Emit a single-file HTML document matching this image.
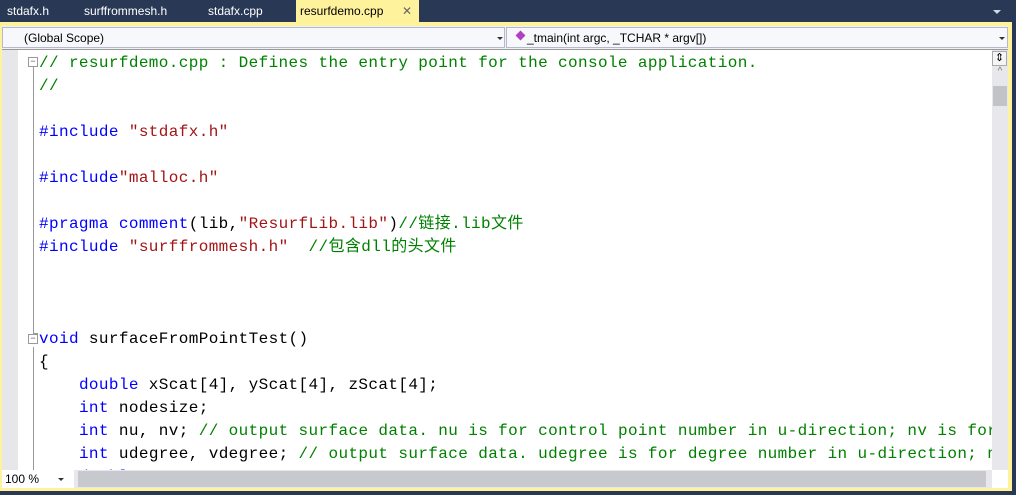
<html><head><style>
body{margin:0;width:1016px;height:495px;background:#293955;position:relative;overflow:hidden;font-family:"Liberation Sans",sans-serif}
.tab{position:absolute;top:3px;font-size:12px;color:#fff;line-height:17px}
.code{position:absolute;left:39px;font-family:"Liberation Mono","Noto Sans CJK SC",monospace;font-size:16px;letter-spacing:0.38px;white-space:pre;line-height:23px;color:#000}
.c{color:#008000}.k{color:#0000ff}.s{color:#a31515}
.fb{position:absolute;left:28px;width:8px;height:8px;border:1px solid #999;background:#fff;font-size:9px;line-height:8px;text-align:center;color:#555;font-family:"Liberation Mono",monospace}
</style></head><body>
<div class="tab" style="left:7px">stdafx.h</div>
<div class="tab" style="left:84px">surffrommesh.h</div>
<div class="tab" style="left:208px">stdafx.cpp</div>
<div style="position:absolute;left:296px;top:0;width:123px;height:23px;background:#fff29d"></div>
<div class="tab" style="left:300px;color:#000">resurfdemo.cpp</div>
<div class="tab" style="left:402px;color:#666;font-size:12px">✕</div>
<div style="position:absolute;left:993px;top:10px;border:4px solid transparent;border-top:4px solid #cfd6e5;border-bottom:0"></div>
<div style="position:absolute;left:0;top:22px;width:1012px;height:469px;background:#fff29d"></div>
<div style="position:absolute;left:2px;top:26px;width:1006px;height:23px;background:#f0f1f7;border-bottom:1px solid #999"></div>
<div style="position:absolute;left:2px;top:27px;width:503px;height:21px;border:1px solid #b5bac8;box-sizing:border-box;background:#f7f8fb"></div>
<div style="position:absolute;left:24px;top:31px;font-size:12px">(Global Scope)</div>
<div style="position:absolute;left:497px;top:37px;border:3px solid transparent;border-top:3px solid #333;border-bottom:0"></div>
<div style="position:absolute;left:506px;top:27px;width:502px;height:21px;border:1px solid #b5bac8;box-sizing:border-box;background:#f7f8fb"></div>
<div style="position:absolute;left:517px;top:32px;width:7px;height:7px;background:#b040c0;transform:rotate(45deg)"></div>
<div style="position:absolute;left:527px;top:31px;font-size:12px">_tmain(int argc, _TCHAR * argv[])</div>
<div style="position:absolute;left:999px;top:37px;border:3px solid transparent;border-top:3px solid #333;border-bottom:0"></div>
<div style="position:absolute;left:2px;top:50px;width:990px;height:420px;background:#fff;overflow:hidden">
<div style="position:absolute;left:0;top:0;width:16px;height:420px;background:#e6e7e8"></div>
<div style="position:absolute;left:31px;top:15px;width:1px;height:268px;background:#999"></div>
<div style="position:absolute;left:31px;top:283px;width:5px;height:1px;background:#999"></div>
<div style="position:absolute;left:31px;top:297px;width:1px;height:130px;background:#999"></div>
<div class="fb" style="left:26px;top:7px">−</div>
<div class="fb" style="left:26px;top:284px">−</div>
<div class="code" style="top:2px;left:37px"><span class="c">// resurfdemo.cpp : Defines the entry point for the console application.
//</span>

<span class="k">#include</span> <span class="s">"stdafx.h"</span>

<span class="k">#include</span><span class="s">"malloc.h"</span>

<span class="k">#pragma</span> <span class="k">comment</span>(lib,<span class="s">"ResurfLib.lib"</span>)<span class="c">//链接.lib文件</span>
<span class="k">#include</span> <span class="s">"surffrommesh.h"</span>  <span class="c">//包含dll的头文件</span>



<span class="k">void</span> surfaceFromPointTest()
{
    <span class="k">double</span> xScat[4], yScat[4], zScat[4];
    <span class="k">int</span> nodesize;
    <span class="k">int</span> nu, nv; <span class="c">// output surface data. nu is for control point number in u-direction; nv is for</span>
    <span class="k">int</span> udegree, vdegree; <span class="c">// output surface data. udegree is for degree number in u-direction; n</span>
    <span class="k">double</span> </div>
</div>
<div style="position:absolute;left:992px;top:50px;width:16px;height:420px;background:#e8e8ec"></div>
<div style="position:absolute;left:992px;top:51px;width:15px;height:15px;border:1px solid #aaa;box-sizing:border-box;background:#f5f5f5;font-size:11px;line-height:13px;text-align:center">⇕</div>
<div style="position:absolute;left:992px;top:66px;width:16px;height:18px;color:#777;font-size:10px;text-align:center">^</div>
<div style="position:absolute;left:993px;top:86px;width:14px;height:20px;background:#c2c3c9"></div>
<div style="position:absolute;left:2px;top:470px;width:1006px;height:18px;background:#e8e8ec"></div>
<div style="position:absolute;left:2px;top:470px;width:72px;height:18px;background:#fff;font-size:12px;line-height:18px;padding-left:3px;box-sizing:border-box">100 %<span style="position:absolute;left:56px;top:8px;border:3px solid transparent;border-top:3px solid #333;border-bottom:0"></span></div>
<div style="position:absolute;left:78px;top:471px;height:16px;background:#c8c9ce;width:908px"></div>
<div style="position:absolute;left:992px;top:470px;width:16px;height:18px;background:#fff"></div>
</body></html>
